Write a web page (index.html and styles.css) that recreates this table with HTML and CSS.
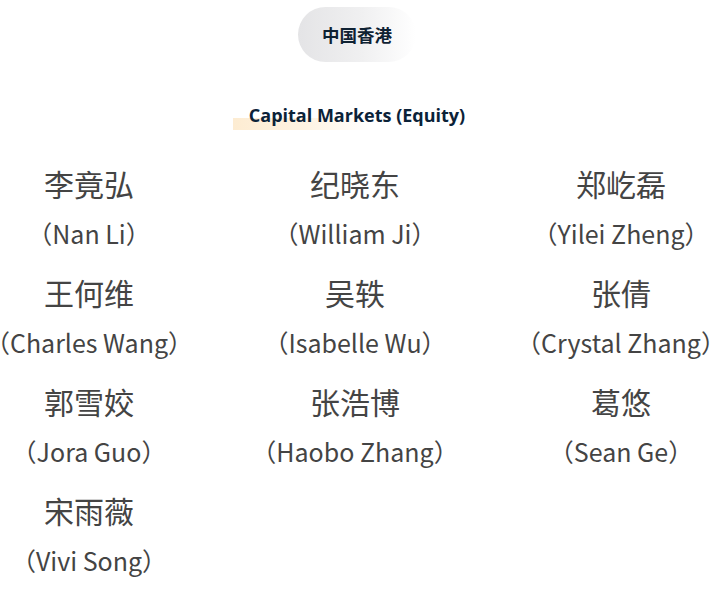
FILE: index.html
```html
<!DOCTYPE html>
<html lang="zh">
<head>
<meta charset="utf-8">
<link rel="stylesheet" href="styles.css">
</head>
<body>
<div class="page">
  <div class="tabbar"><span class="pill">中国香港</span></div>
  <h2 class="section-title"><span class="title-text">Capital Markets (Equity)</span></h2>
  <div class="grid">
    <div class="person"><div class="cn">李竟弘</div><div class="en">（Nan Li）</div></div>
    <div class="person"><div class="cn">纪晓东</div><div class="en">（William Ji）</div></div>
    <div class="person"><div class="cn">郑屹磊</div><div class="en">（Yilei Zheng）</div></div>
    <div class="person"><div class="cn">王何维</div><div class="en">（Charles Wang）</div></div>
    <div class="person"><div class="cn">吴轶</div><div class="en">（Isabelle Wu）</div></div>
    <div class="person"><div class="cn">张倩</div><div class="en">（Crystal Zhang）</div></div>
    <div class="person"><div class="cn">郭雪姣</div><div class="en">（Jora Guo）</div></div>
    <div class="person"><div class="cn">张浩博</div><div class="en">（Haobo Zhang）</div></div>
    <div class="person"><div class="cn">葛悠</div><div class="en">（Sean Ge）</div></div>
    <div class="person"><div class="cn">宋雨薇</div><div class="en">（Vivi Song）</div></div>
  </div>
</div>
</body>
</html>
```
FILE: styles.css
```css
html, body {
  margin: 0;
  padding: 0;
  background: #ffffff;
}
body {
  font-family: "Noto Sans CJK SC", "Noto Sans", sans-serif;
}
.page {
  width: 714px;
}
.tabbar {
  display: flex;
  justify-content: center;
  padding-top: 7px;
}
.pill {
  display: inline-flex;
  align-items: center;
  justify-content: center;
  height: 55px;
  width: 118px;
  border-radius: 28px;
  background: linear-gradient(90deg, #e4e4e6 0%, #f0f0f1 55%, #ffffff 100%);
  font-weight: 700;
  font-size: 17.5px;
  color: #0f2233;
}
.section-title {
  margin: 0;
  padding-top: 41px;
  display: flex;
  justify-content: center;
  font-family: "Open Sans", "Noto Sans", sans-serif;
  font-weight: 700;
  font-size: 18px;
  color: #0b2238;
  isolation: isolate;
}
.title-text {
  position: relative;
  line-height: 24px;
  padding: 0 1px;
}
.title-text::before {
  content: "";
  position: absolute;
  left: -15px;
  top: 15px;
  width: 140px;
  height: 12px;
  background: linear-gradient(90deg, #fdecd2 0%, #fef3e2 50%, rgba(255,255,255,0) 100%);
  z-index: -1;
}
.grid {
  display: grid;
  grid-template-columns: repeat(3, 178px);
  column-gap: 88px;
  row-gap: 9px;
  margin-top: 31px;
}
.person {
  display: flex;
  flex-direction: column;
  align-items: center;
  color: #444444;
  white-space: nowrap;
}
.cn {
  font-size: 30px;
  line-height: 50px;
}
.en {
  font-size: 25px;
  line-height: 50px;
}
```
